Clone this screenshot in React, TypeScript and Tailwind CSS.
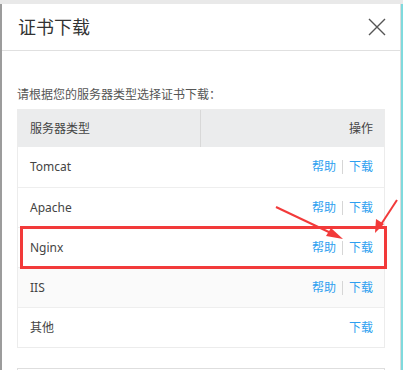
import React from 'react';

interface Row {
  name: string;
  help: boolean;
  striped?: boolean;
}

const rows: Row[] = [
  { name: 'Tomcat', help: true },
  { name: 'Apache', help: true },
  { name: 'Nginx', help: true },
  { name: 'IIS', help: true, striped: true },
  { name: '其他', help: false },
];

const font = { fontFamily: '"Noto Sans", "Noto Sans CJK SC", sans-serif' };

const App: React.FC = () => {
  return (
    <div className="relative w-[403px] h-[370px] overflow-hidden bg-[#e9e9e9]" style={font}>
      <div className="flex h-full pt-[4px]">
        <div className="w-[2px] bg-[#9c9c9c]"></div>
        {/* Dialog */}
        <div className="flex-1 bg-white border-r border-[#dcdcdc]">
          <div className="flex items-center justify-between h-[47px] pl-[16px] pr-[14px] border-b border-[#e0e0e0]">
            <span className="text-[18px] text-[#333]">证书下载</span>
            <svg width="18" height="18" viewBox="0 0 18 18" className="text-[#555]">
              <path d="M1 1 L17 17 M17 1 L1 17" stroke="currentColor" strokeWidth="1.4" fill="none" />
            </svg>
          </div>

          <div className="pl-[15px] pr-[15px] pt-[35px]">
            <p className="text-[12px] leading-[18px] text-[#555] mb-[5px]">请根据您的服务器类型选择证书下载：</p>

            <div className="border border-[#ececec]">
              <div className="flex h-[37px] bg-[#ebeced] text-[12px] text-[#444]">
                <div className="w-[183px] flex items-center pl-[12px] border-r border-[#d8d8d8]">服务器类型</div>
                <div className="flex-1 flex items-center justify-end pr-[11px]">操作</div>
              </div>
              {rows.map((row, i) => (
                <div
                  key={row.name}
                  className={`flex items-center justify-between h-[40px] pl-[12px] pr-[11px] text-[12px] ${
                    i > 0 ? 'border-t border-[#eeeeee]' : ''
                  } ${row.striped ? 'bg-[#fafafa]' : 'bg-white'}`}
                >
                  <span className="text-[#444]">{row.name}</span>
                  <span className="flex items-center text-[#2d9ff0]">
                    {row.help && (
                      <>
                        <span>帮助</span>
                        <span className="mx-[6px] w-px h-[14px] bg-[#d6d6d6]"></span>
                      </>
                    )}
                    <span>下载</span>
                  </span>
                </div>
              ))}
            </div>

            <div className="mt-[20px] h-[20px] border border-[#dedede] border-b-0"></div>
          </div>
        </div>
        <div className="w-[2px] bg-[#7fdadd]"></div>
      </div>

      {/* annotation: red box + arrows */}
      <div className="absolute left-[20px] top-[226px] w-[367px] h-[43px] border-[3px] border-[#f23a3a]"></div>
      <svg className="absolute left-0 top-0" width="403" height="370">
        <line x1="276" y1="207" x2="333" y2="234" stroke="#f23a3a" strokeWidth="2" />
        <polygon points="343,239 326,236 331,228" fill="#f23a3a" />
        <line x1="397" y1="200" x2="380" y2="226" stroke="#f23a3a" strokeWidth="2" />
        <polygon points="375,233 376,219 384,224" fill="#f23a3a" />
      </svg>
    </div>
  );
};

export default App;
